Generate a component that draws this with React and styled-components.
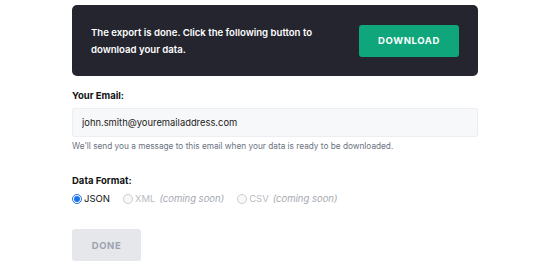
import React from 'react';
import styled, { createGlobalStyle } from 'styled-components';

const GlobalStyle = createGlobalStyle`
  body {
    margin: 0;
    background: #fff;
    font-family: Inter, "Noto Sans", sans-serif;
    color: #111827;
  }
`;

const StyledPage = styled.div`
  width: 406px;
  margin: 0 auto;
  padding-top: 5px;
`;
const StyledNotice = styled.div`
  display: flex;
  align-items: center;
  justify-content: space-between;
  height: 71px;
  box-sizing: border-box;
  padding: 0 19px 0 19px;
  border-radius: 5px;
  background: #24252f;
`;
const StyledNoticeText = styled.p`
  margin: 0;
  width: 240px;
  font-size: 9.6px;
  line-height: 17px;
  font-weight: 600;
  color: #fff;
`;
const StyledButton = styled.button`
  width: ${p => p.$width}px;
  height: 32px;
  border: none;
  border-radius: 3px;
  padding: 0;
  font-family: inherit;
  font-size: 9.5px;
  font-weight: 700;
  letter-spacing: 0.6px;
  text-transform: uppercase;
  color: ${p => (p.$disabled ? '#9ca3af' : '#fff')};
  background: ${p => (p.$disabled ? '#e5e7eb' : '#0ea67a')};
  cursor: ${p => (p.$disabled ? 'default' : 'pointer')};
`;
const StyledField = styled.div`
  margin-top: ${p => p.$top}px;
`;
const StyledLabel = styled.label`
  display: block;
  font-size: 9.5px;
  font-weight: 700;
  line-height: 14px;
  color: #111;
`;
const StyledInput = styled.input`
  display: block;
  width: 100%;
  box-sizing: border-box;
  height: 29px;
  margin-top: 5px;
  padding: 0 9px;
  border: 1px solid #eceef1;
  border-radius: 2px;
  background: #f7f8fa;
  font-family: inherit;
  font-size: 9.4px;
  color: #222;
  &:focus {
    outline: none;
  }
`;
const StyledHelp = styled.p`
  margin: 3px 0 0;
  font-size: 8.25px;
  line-height: 12px;
  color: #6b7280;
`;
const StyledRadios = styled.div`
  display: flex;
  align-items: center;
  gap: 13px;
  margin-top: 5px;
`;
const StyledOption = styled.label`
  display: flex;
  align-items: center;
  gap: 1px;
  font-size: 9.5px;
  color: ${p => (p.$disabled ? '#b7bcc4' : '#111')};
`;
const StyledRadio = styled.input`
  width: 10px;
  height: 10px;
  margin: 0 1px 0 0;
  accent-color: #1a73e8;
`;
const StyledSoon = styled.em`
  margin-left: 3px;
  color: #a3a8b0;
`;
const StyledActions = styled.div`
  margin-top: 25px;
`;

const formats = [
  { name: 'JSON', soon: false },
  { name: 'XML', soon: true },
  { name: 'CSV', soon: true },
];

const App = () => (
  <StyledPage>
    <GlobalStyle />
    <StyledNotice>
      <StyledNoticeText>
        The export is done. Click the following button to download your data.
      </StyledNoticeText>
      <StyledButton $width={100}>Download</StyledButton>
    </StyledNotice>

    <StyledField $top={13}>
      <StyledLabel htmlFor="email">Your Email:</StyledLabel>
      <StyledInput id="email" type="email" defaultValue="john.smith@youremailaddress.com" />
      <StyledHelp>We'll send you a message to this email when your data is ready to be downloaded.</StyledHelp>
    </StyledField>

    <StyledField $top={22}>
      <StyledLabel>Data Format:</StyledLabel>
      <StyledRadios>
        {formats.map(f => (
          <StyledOption key={f.name} $disabled={f.soon}>
            <StyledRadio type="radio" name="format" defaultChecked={!f.soon} disabled={f.soon} />
            {f.name}
            {f.soon && <StyledSoon>(coming soon)</StyledSoon>}
          </StyledOption>
        ))}
      </StyledRadios>
    </StyledField>

    <StyledActions>
      <StyledButton $width={69} $disabled disabled>Done</StyledButton>
    </StyledActions>
  </StyledPage>
);

export default App;
